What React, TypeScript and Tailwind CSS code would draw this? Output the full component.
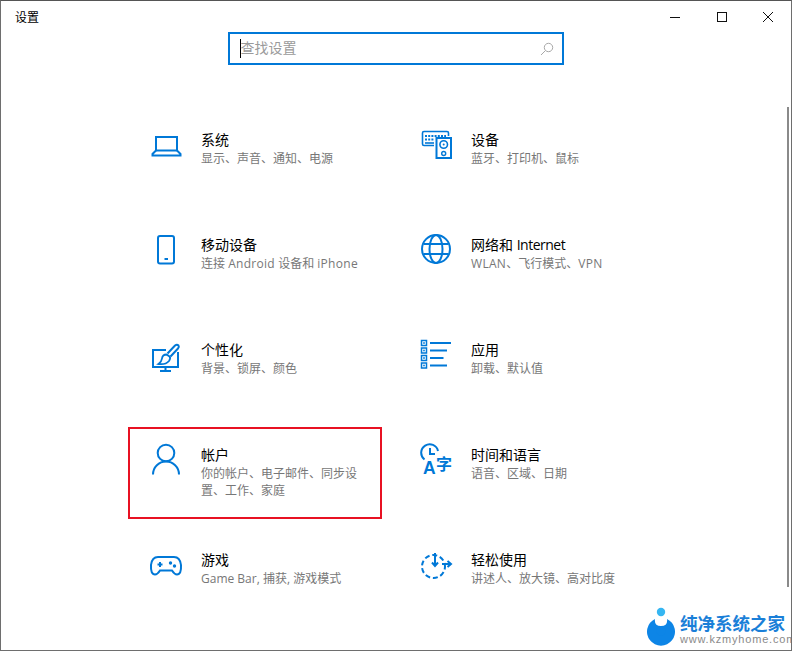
import React from "react";

const B = "#0078d7";
const s = { fill: "none", stroke: B, strokeWidth: 2 } as const;

function Icon({ children }: { children: React.ReactNode }) {
  return (
    <svg width="36" height="36" viewBox="0 0 36 36" className="block shrink-0">
      {children}
    </svg>
  );
}

const Laptop = () => (
  <Icon>
    <rect x="7" y="9" width="21" height="13.5" {...s} />
    <path d="M7 22.5 L3.5 26 V27.5 H31.5 V26 L28 22.5" {...s} />
  </Icon>
);
const Devices = () => (
  <Icon>
    <path d="M15 17.5 H5 Q3.5 17.5 3.5 16 V5 Q3.5 3.5 5 3.5 H28 Q29.5 3.5 29.5 5 V8" {...s} strokeWidth={1.6} />
    <path d="M6 8 H27" stroke={B} strokeWidth={2} strokeDasharray="2 1.2" />
    <path d="M6 11.5 H15" stroke={B} strokeWidth={2} strokeDasharray="2 1.2" />
    <path d="M6 15 H15" stroke={B} strokeWidth={1.6} />
    <rect x="17.5" y="10" width="14.5" height="20" {...s} />
    <circle cx="24.7" cy="16.5" r="3.8" {...s} strokeWidth={1.6} />
    <circle cx="24.7" cy="16.5" r="1" fill={B} />
    <circle cx="24.7" cy="25.5" r="2" {...s} strokeWidth={1.4} />
  </Icon>
);
const Phone = () => (
  <Icon>
    <rect x="9" y="3" width="16" height="27.5" rx="2" {...s} />
    <path d="M15.5 26 H19" {...s} />
  </Icon>
);
const Personal = () => (
  <Icon>
    <path d="M17 12 H4 V29 H29 V14" {...s} />
    <path d="M16.5 32 V29 M11 33 H22" {...s} />
    <path d="M18.5 15.5 L26 7.5 Q28 6 29.5 7.5 Q30.5 9 29 10.5 L21.5 18.5" {...s} />
    <path d="M17.5 16.5 Q13.5 16.5 13 20.5 Q12.5 24 9.5 26 Q16.5 27 20 23 Q22 20 20.5 18.5 Z" {...s} strokeWidth={1.8} />
  </Icon>
);
const Globe = () => (
  <Icon>
    <circle cx="17" cy="16" r="14" {...s} />
    <ellipse cx="17" cy="16" rx="6.5" ry="14" {...s} />
    <path d="M4.5 11 H29.5 M4.5 21 H29.5" {...s} />
  </Icon>
);
const Apps = () => (
  <Icon>
    {[5, 12.5, 20, 27.5].map((y) => (
      <g key={y}>
        <rect x="2.5" y={y - 2.5} width="5" height="5" fill="none" stroke={B} strokeWidth={1.5} />
        <rect x="4.2" y={y - 0.8} width="1.6" height="1.6" fill={B} />
      </g>
    ))}
    <path d="M11 5 H32 M11 12.5 H28 M11 20 H24.5 M11 27.5 H28" {...s} />
  </Icon>
);
const Person = () => (
  <Icon>
    <circle cx="17" cy="10" r="8.3" {...s} />
    <path d="M4 31.5 C4 24 10 18.5 17 18.5 S30 24 30 31.5" {...s} />
  </Icon>
);
const Clock = () => (
  <Icon>
    <path d="M5.5 16.5 A8.5 8.5 0 1 1 19 8" {...s} />
    <path d="M11 5 V11 H16" {...s} />
    <text x="4" y="31" fontFamily="'Liberation Sans', sans-serif" fontSize="17.5" fontWeight="700" fill={B}>A</text>
    <text x="17" y="27" fontFamily="'Noto Sans CJK SC', sans-serif" fontSize="16" fontWeight="700" fill={B}>字</text>
  </Icon>
);
const Game = () => (
  <Icon>
    <path d="M9 9 H25 Q31 9 32 17 Q32.5 26.5 28 26.5 Q25.5 26.5 23 22.5 H11 Q8.5 26.5 6 26.5 Q1.5 26.5 2 17 Q3 9 9 9 Z" {...s} />
    <path d="M8.5 16.5 H13.5 M11 14 V19" {...s} />
    <circle cx="21.5" cy="15" r="1.7" fill={B} />
    <circle cx="25.5" cy="18" r="1.7" fill={B} />
  </Icon>
);
const Ease = () => (
  <Icon>
    <circle cx="14.5" cy="18.5" r="11.5" {...s} strokeDasharray="5 2.8" strokeDashoffset="2" />
    <path d="M16 5 V17 M13 14.5 L16 18 L19 14.5" {...s} />
    <path d="M23 16 H31 M28.5 13 L32 16 L28.5 19" {...s} />
  </Icon>
);

type Item = { title: React.ReactNode; sub: React.ReactNode; icon: React.ReactNode; mark?: boolean };

const L = ({ children }: { children: React.ReactNode }) => (
  <span className="tracking-[0.3px]">{children}</span>
);
const T = ({ children }: { children: React.ReactNode }) => (
  <span className="tracking-[-0.5px]">{children}</span>
);

const items: Item[] = [
  { title: "系统", sub: "显示、声音、通知、电源", icon: <Laptop /> },
  { title: "设备", sub: "蓝牙、打印机、鼠标", icon: <Devices /> },
  { title: "移动设备", sub: <>连接 <L>Android</L> 设备和 <L>iPhone</L></>, icon: <Phone /> },
  { title: <>网络和 <T>Internet</T></>, sub: <><L>WLAN</L>、飞行模式、<L>VPN</L></>, icon: <Globe /> },
  { title: "个性化", sub: "背景、锁屏、颜色", icon: <Personal /> },
  { title: "应用", sub: "卸载、默认值", icon: <Apps /> },
  { title: "帐户", sub: "你的帐户、电子邮件、同步设置、工作、家庭", icon: <Person />, mark: true },
  { title: "时间和语言", sub: "语音、区域、日期", icon: <Clock /> },
  { title: "游戏", sub: "Game Bar, 捕获, 游戏模式", icon: <Game /> },
  { title: "轻松使用", sub: "讲述人、放大镜、高对比度", icon: <Ease /> },
];

export default function App() {
  return (
    <div
      className="relative w-[792px] h-[651px] overflow-hidden bg-white border-t border-l border-b border-r border-t-[#555555] border-l-[#6e6e6e] border-b-[#6e6e6e] border-r-[#6e6e6e] text-black"
      style={{ fontFamily: "'Open Sans', 'Noto Sans CJK SC', sans-serif" }}
    >
      <div className="flex h-[31px] items-start">
        <div className="pl-[14px] pt-[8px] text-[12px] leading-[18px]">设置</div>
        <div className="ml-auto flex">
          <svg width="46" height="31" viewBox="0 0 46 31"><path d="M15 16.5 H25" stroke="#111" /></svg>
          <svg width="46" height="31" viewBox="0 0 46 31"><rect x="16.5" y="11.5" width="9" height="9" fill="none" stroke="#111" /></svg>
          <svg width="46" height="31" viewBox="0 0 46 31" className="mr-[-2px]"><path d="M16 11 L26 21 M26 11 L16 21" stroke="#111" /></svg>
        </div>
      </div>

      <div className="flex justify-center">
        <div className="ml-[-1px] flex h-[33px] w-[336px] items-center border-2 border-[#0078d7] pl-[10px] pr-[8px]">
          <span className="h-[19px] w-px bg-black" />
          <span className="mt-[-2px] text-[14px] leading-[20px] text-[#9a9a9a]">查找设置</span>
          <svg width="14" height="14" viewBox="0 0 14 14" className="ml-auto">
            <circle cx="8.5" cy="5.5" r="4.2" fill="none" stroke="#a8a8a8" />
            <path d="M5.5 8.5 L1 13" stroke="#a8a8a8" />
          </svg>
        </div>
      </div>

      <div className="ml-[128px] mt-[63px] grid w-[540px] grid-cols-[270px_270px] auto-rows-[105px]">
        {items.map((it, i) => (
          <div key={i} className="relative flex">
            <div className="ml-[20px] mr-[16px]">{it.icon}</div>
            <div className="w-[165px] pt-[2px]">
              <div className="text-[14px] leading-[20px] text-black">{it.title}</div>
              <div className="text-[12px] leading-[17px] text-[#777777]">{it.sub}</div>
            </div>
            {it.mark && (
              <div className="absolute left-[-1px] top-[-16px] h-[92px] w-[254px] border-2 border-[#e81123]" />
            )}
          </div>
        ))}
      </div>

      <div className="absolute right-[2px] top-[106px] h-[480px] w-[2px] bg-[#8a8a8a]" />

      <div className="absolute bottom-[-1px] right-[0px] flex h-[47px] w-[161px] items-start bg-white pl-[14px]">
        <svg width="34" height="46" viewBox="0 0 34 46" className="shrink-0">
          <circle cx="17" cy="8" r="4.2" fill="#35b6f2" />
          <path d="M11 15 A14 14 0 1 0 23 15 Q24 22 17 22 Q10 22 11 15 Z" fill="#0d85e6" />
          <circle cx="17" cy="27" r="4.6" fill="#0d85e6" />
        </svg>
        <div className="ml-[2px] flex flex-col pt-[9px]">
          <div className="text-[17.5px] font-bold leading-[20px] whitespace-nowrap text-[#1a7fd8]">纯净系统之家</div>
          <div className="text-[11px] leading-[13px] whitespace-nowrap tracking-[0.8px] text-[#8a8a8a]" style={{ fontFamily: "'Liberation Sans', sans-serif" }}>www.kzmyhome.com</div>
        </div>
      </div>
    </div>
  );
}
